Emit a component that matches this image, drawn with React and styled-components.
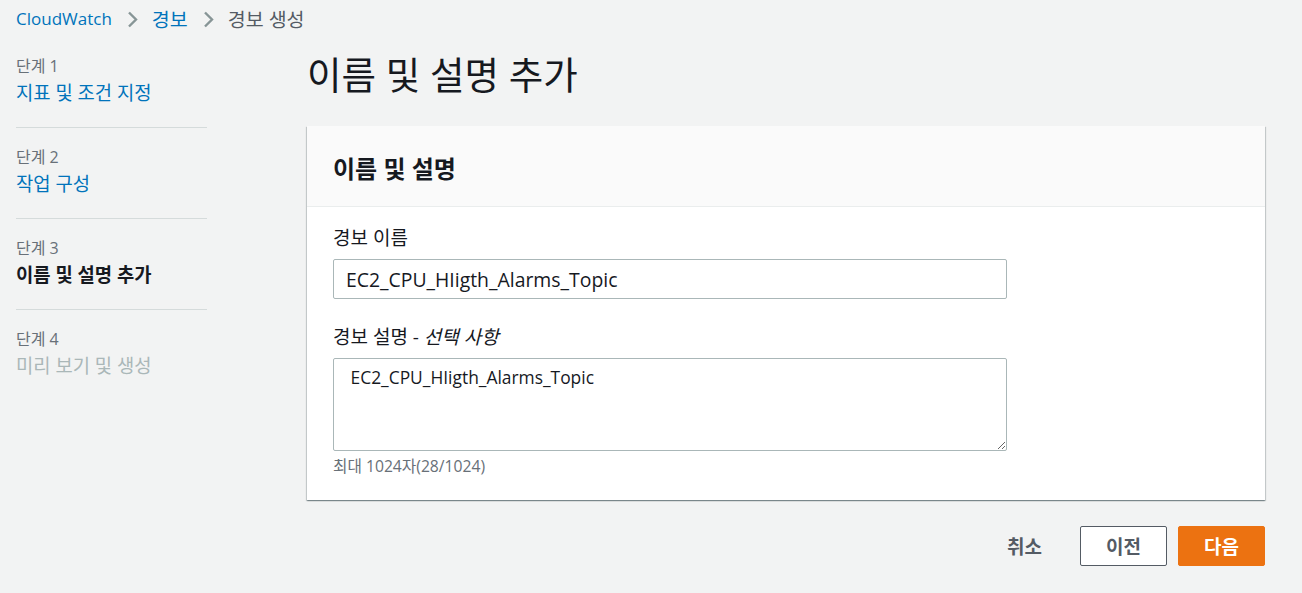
import styled, { createGlobalStyle } from "styled-components";

const GlobalStyle = createGlobalStyle`
  body {
    margin: 0;
    background: #f2f3f3;
    font-family: "Open Sans", "Noto Sans CJK KR", sans-serif;
    color: #16191f;
  }
  * {
    box-sizing: border-box;
  }
`;

const Page = styled.div`
  padding: 0 37px 0 16px;
  min-height: 593px;
`;

const Breadcrumbs = styled.nav`
  display: flex;
  align-items: center;
  height: 37px;
  font-size: 17px;
  gap: 14px;
`;

const Crumb = styled.span`
  color: ${(props) => (props.current ? "#545b64" : "#0073bb")};
  font-size: ${(props) => (props.korean ? 19.5 : 17)}px;
`;

const Chevron = styled.svg`
  width: 12px;
  height: 17px;
  margin-top: 1px;
`;

const Layout = styled.div`
  display: flex;
  gap: 100px;
`;

const Sidebar = styled.ul`
  list-style: none;
  margin: 0;
  padding: 0;
  width: 191px;
  flex-shrink: 0;
`;

const Step = styled.li`
  padding: 18px 0 20px;
  border-bottom: ${(props) => (props.last ? "none" : "1px solid #d5dbdb")};
`;

const StepLabel = styled.div`
  font-size: 16px;
  color: #687078;
  line-height: 22px;
`;

const StepName = styled.div`
  font-size: 18.8px;
  line-height: 28px;
  margin-top: 2px;
  color: ${(props) =>
    props.state === "active"
      ? "#16191f"
      : props.state === "disabled"
      ? "#aab7b8"
      : "#0073bb"};
  font-weight: ${(props) => (props.state === "active" ? 700 : 400)};
`;

const Main = styled.main`
  flex: 1;
`;

const Title = styled.h1`
  margin: 0;
  font-size: 37.5px;
  font-weight: 400;
  line-height: 52px;
  padding: 12px 0 25px;
  color: #16191f;
`;

const Panel = styled.section`
  background: #fff;
  box-shadow: 0 1px 1px 0 rgba(0, 28, 36, 0.3),
    1px 1px 1px 0 rgba(0, 28, 36, 0.15), -1px 1px 1px 0 rgba(0, 28, 36, 0.15);
`;

const PanelHeader = styled.header`
  background: #fafafa;
  border-bottom: 1px solid #eaeded;
  height: 81px;
  display: flex;
  align-items: center;
  padding: 0 26px;
`;

const PanelTitle = styled.h2`
  margin: 0;
  font-size: 24px;
  font-weight: 700;
  margin-top: 2px;
`;

const PanelBody = styled.div`
  padding: 18px 26px 24px;
`;

const Field = styled.div`
  width: 674px;
  margin-bottom: ${(props) => props.spacing || 0}px;
`;

const Label = styled.label`
  display: block;
  font-size: 19px;
  line-height: 26px;
  color: #16191f;
  margin-bottom: 8px;
  em {
    font-style: italic;
  }
`;

const TextInput = styled.input`
  width: 100%;
  height: 40px;
  border: 1px solid #aab7b8;
  border-radius: 2px;
  padding: 0 12px;
  font-family: inherit;
  font-size: 19.4px;
  color: #16191f;
  background: #fff;
  outline: none;
`;

const TextArea = styled.textarea`
  display: block;
  width: 100%;
  height: 93px;
  border: 1px solid #aab7b8;
  border-radius: 2px;
  padding: 6px 12px;
  font-family: inherit;
  font-size: 17.4px;
  line-height: 24px;
  color: #16191f;
  background: #fff;
  resize: vertical;
  outline: none;
`;

const Hint = styled.div`
  font-size: 15.7px;
  color: #687078;
  line-height: 20px;
  margin-top: 5px;
`;

const Actions = styled.div`
  display: flex;
  justify-content: flex-end;
  align-items: center;
  gap: 11px;
  margin-top: 26px;
`;

const Button = styled.button`
  height: 40px;
  min-width: ${(props) => (props.variant === "link" ? 0 : 87)}px;
  padding: 0 20px;
  border-radius: 2px;
  font-family: inherit;
  font-size: 19px;
  font-weight: 700;
  cursor: pointer;
  border: 1px solid
    ${(props) =>
      props.variant === "primary"
        ? "#ec7211"
        : props.variant === "link"
        ? "transparent"
        : "#545b64"};
  background: ${(props) =>
    props.variant === "primary"
      ? "#ec7211"
      : props.variant === "link"
      ? "transparent"
      : "#fff"};
  color: ${(props) => (props.variant === "primary" ? "#fff" : "#545b64")};
  margin-right: ${(props) => (props.variant === "link" ? 6 : 0)}px;
`;

function Arrow() {
  return (
    <Chevron viewBox="0 0 12 17">
      <path d="M3 1.5 L10 8.5 L3 15.5" fill="none" stroke="#879596" strokeWidth="2.4" />
    </Chevron>
  );
}

const steps = [
  { label: "단계 1", name: "지표 및 조건 지정", state: "link" },
  { label: "단계 2", name: "작업 구성", state: "link" },
  { label: "단계 3", name: "이름 및 설명 추가", state: "active" },
  { label: "단계 4", name: "미리 보기 및 생성", state: "disabled" },
];

export default function App() {
  const alarmName = "EC2_CPU_HIigth_Alarms_Topic";
  return (
    <Page>
      <GlobalStyle />
      <Breadcrumbs>
        <Crumb>CloudWatch</Crumb>
        <Arrow />
        <Crumb korean>경보</Crumb>
        <Arrow />
        <Crumb korean current>
          경보 생성
        </Crumb>
      </Breadcrumbs>
      <Layout>
        <Sidebar>
          {steps.map((s, i) => (
            <Step key={s.label} last={i === steps.length - 1}>
              <StepLabel>{s.label}</StepLabel>
              <StepName state={s.state}>{s.name}</StepName>
            </Step>
          ))}
        </Sidebar>
        <Main>
          <Title>이름 및 설명 추가</Title>
          <Panel>
            <PanelHeader>
              <PanelTitle>이름 및 설명</PanelTitle>
            </PanelHeader>
            <PanelBody>
              <Field spacing={25}>
                <Label>경보 이름</Label>
                <TextInput defaultValue={alarmName} spellCheck={false} />
              </Field>
              <Field>
                <Label>
                  경보 설명 - <em>선택 사항</em>
                </Label>
                <TextArea defaultValue={" " + alarmName} spellCheck={false} />
                <Hint>최대 1024자(28/1024)</Hint>
              </Field>
            </PanelBody>
          </Panel>
          <Actions>
            <Button variant="link">취소</Button>
            <Button>이전</Button>
            <Button variant="primary">다음</Button>
          </Actions>
        </Main>
      </Layout>
    </Page>
  );
}
